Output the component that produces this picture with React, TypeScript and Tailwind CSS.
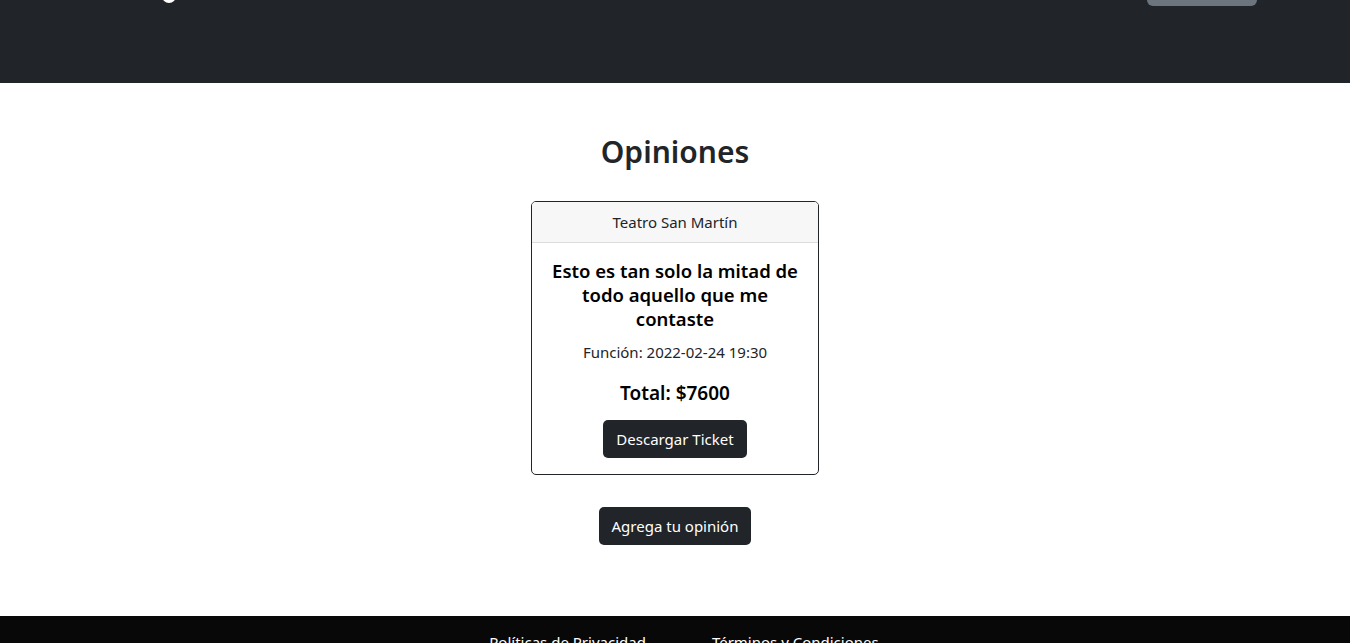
import React from 'react';

const font = { fontFamily: '"Segoe UI", "Noto Sans", "Liberation Sans", sans-serif' };

const App: React.FC = () => {
  return (
    <div className="min-h-[643px] flex flex-col bg-white text-[#212529]" style={font}>
      {/* Navbar (scrolled, only bottom part visible) */}
      <header className="h-[83px] bg-[#212529] overflow-hidden">
        <div className="flex items-start justify-between pl-[160px] pr-[93px] -mt-[32px]">
          <div className="w-[18px] h-[35px] flex items-end justify-center">
            <div className="w-[14px] h-[14px] rounded-full bg-white" />
          </div>
          <div className="w-[110px] h-[38px] rounded-[6px] bg-[#6c757d]" />
        </div>
      </header>

      {/* Main */}
      <main className="h-[533px] flex flex-col items-center pt-[51px]">
        <h3 className="text-[30px] leading-[1.2] font-semibold mb-[31px]">Opiniones</h3>

        <div className="w-[288px] border border-[#212529] rounded-[5px] overflow-hidden">
          <div className="h-[41px] bg-[#f7f7f7] border-b border-[#dcdcdc] flex items-center justify-center text-[15px]">
            Teatro San Martín
          </div>
          <div className="px-4 pt-4 pb-[16px] flex flex-col items-center text-center">
            <h5 className="text-[18.5px] leading-[24px] font-semibold text-black">
              Esto es tan solo la mitad de todo aquello que me contaste
            </h5>
            <p className="mt-[9px] text-[15px] leading-[24px]">Función: 2022-02-24 19:30</p>
            <p className="mt-[17px] text-[19px] leading-[24px] font-semibold text-black">Total: $7600</p>
            <button className="mt-[15px] h-[38px] px-[13px] rounded-[5px] bg-[#212529] text-white text-[15px]">
              Descargar Ticket
            </button>
          </div>
        </div>

        <button className="mt-[32px] h-[38px] px-[13px] rounded-[5px] bg-[#212529] text-white text-[15px]">
          Agrega tu opinión
        </button>
      </main>

      {/* Footer */}
      <footer className="flex-1 bg-[#080808] text-white">
        <div className="flex justify-center gap-[66px] pt-[15px] text-[15px] pl-[18px]">
          <a className="whitespace-nowrap">Políticas de Privacidad</a>
          <a className="whitespace-nowrap">Términos y Condiciones</a>
        </div>
      </footer>
    </div>
  );
};

export default App;
